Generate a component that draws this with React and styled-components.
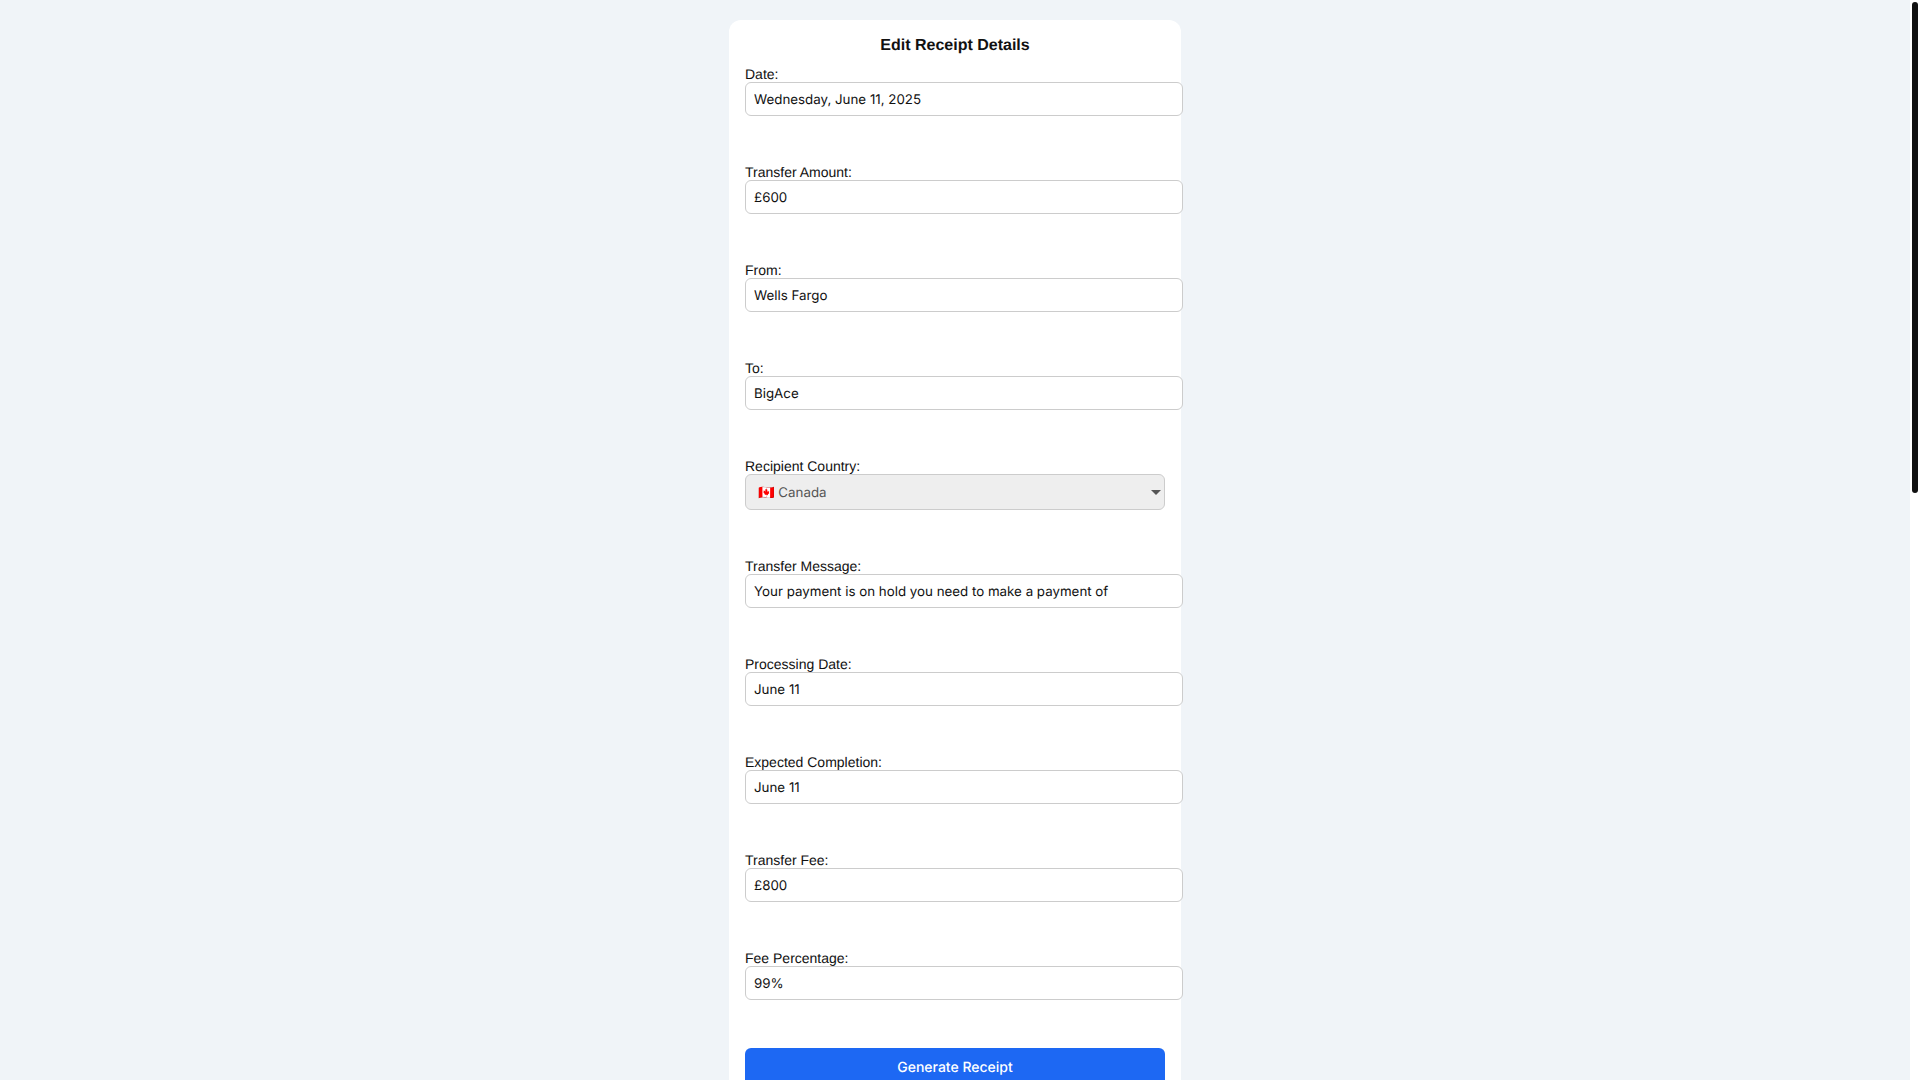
import styled, { createGlobalStyle } from "styled-components";

const GlobalStyle = createGlobalStyle`
  body {
    margin: 0;
    overflow: hidden;
    font-family: "Liberation Sans", Arial, sans-serif;
    background-color: #f0f4f8;
    color: #111;
    text-rendering: geometricPrecision;
  }

  input,
  select,
  button {
    text-rendering: geometricPrecision;
  }
`;

const Shell = styled.div`
  display: flex;
  height: 100vh;
`;

const Content = styled.main`
  flex: 1;
  padding: 20px 0;
  overflow: hidden;
`;

const ScrollRail = styled.div`
  flex: 0 0 10px;
  padding: 2px;
  box-sizing: border-box;
  background-color: #fff;
`;

const ScrollThumb = styled.div`
  height: 491px;
  border-radius: 3px;
  background-color: #111;
`;

const Card = styled.form`
  width: 420px;
  margin: 0 auto;
  padding: 16px;
  background-color: #fff;
  border-radius: 12px;
`;

const Title = styled.h3`
  margin: 0 0 11px;
  padding-top: 1px;
  font-size: 16px;
  line-height: 18px;
  font-weight: bold;
  text-align: center;
`;

const Field = styled.div`
  margin-bottom: 48px;
`;

const Label = styled.label`
  display: block;
  font-size: 14px;
  line-height: 16px;
`;

const TextInput = styled.input`
  display: block;
  width: 100%;
  box-sizing: content-box;
  padding: 9px 8px 7px;
  border: 1px solid #ccc;
  border-radius: 6px;
  background-color: #fff;
  color: #111;
  font-family: Inter, sans-serif;
  font-size: 13.3333px;
  line-height: 16px;
  outline: none;
`;

const SelectWrap = styled.div`
  position: relative;

  &::after {
    content: "";
    position: absolute;
    top: 16px;
    right: 4px;
    border-left: 5px solid transparent;
    border-right: 5px solid transparent;
    border-top: 5px solid #555;
    pointer-events: none;
  }
`;

const CountrySelect = styled.select`
  display: block;
  width: 100%;
  height: 36px;
  box-sizing: border-box;
  padding: 9px 12px 7px;
  border: 1px solid #ccc;
  border-radius: 6px;
  appearance: none;
  background-color: #eee;
  color: #555;
  font-family: Inter, sans-serif;
  font-size: 13.3333px;
  opacity: 1;
`;

const SubmitButton = styled.button`
  display: block;
  width: 100%;
  height: 38px;
  border: none;
  border-radius: 6px;
  background-color: #1d68f3;
  color: #fff;
  font-family: Inter, sans-serif;
  font-size: 14px;
  font-weight: 500;
`;

const fieldsBefore = [
  ["Date:", "Wednesday, June 11, 2025"],
  ["Transfer Amount:", "£600"],
  ["From:", "Wells Fargo"],
  ["To:", "BigAce"],
];

const fieldsAfter = [
  ["Transfer Message:", "Your payment is on hold you need to make a payment of"],
  ["Processing Date:", "June 11"],
  ["Expected Completion:", "June 11"],
  ["Transfer Fee:", "£800"],
  ["Fee Percentage:", "99%"],
];

const renderField = ([label, value]) => (
  <Field key={label}>
    <Label>{label}</Label>
    <TextInput type="text" defaultValue={value} />
  </Field>
);

const App = () => {
  return (
    <>
      <GlobalStyle />
      <Shell>
        <Content>
          <Card>
            <Title>Edit Receipt Details</Title>
            {fieldsBefore.map(renderField)}
            <Field>
              <Label>Recipient Country:</Label>
              <SelectWrap>
                <CountrySelect disabled defaultValue="CA">
                  <option value="CA">🇨🇦 Canada</option>
                </CountrySelect>
              </SelectWrap>
            </Field>
            {fieldsAfter.map(renderField)}
            <SubmitButton type="button">Generate Receipt</SubmitButton>
          </Card>
        </Content>
        <ScrollRail>
          <ScrollThumb />
        </ScrollRail>
      </Shell>
    </>
  );
};

export default App;
